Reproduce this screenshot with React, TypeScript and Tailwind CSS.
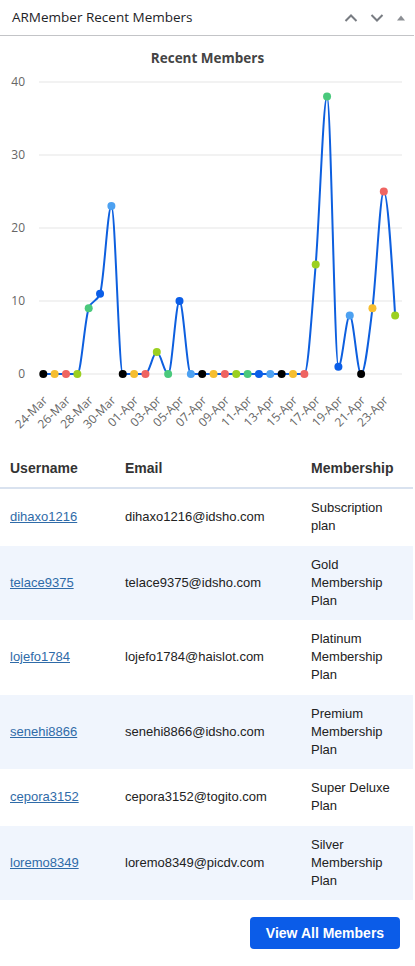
const values = [0, 0, 0, 0, 9, 11, 23, 0, 0, 0, 3, 0, 10, 0, 0, 0, 0, 0, 0, 0, 0, 0, 0, 0, 15, 38, 1, 8, 0, 9, 25, 8];
const colors = ['#000000', '#f6be30', '#ef6461', '#9bd021', '#4ac97c', '#0b5ee8', '#4da1f1'];

const members = [
  { user: 'dihaxo1216', email: 'dihaxo1216@idsho.com', plan: 'Subscription plan' },
  { user: 'telace9375', email: 'telace9375@idsho.com', plan: 'Gold Membership Plan' },
  { user: 'lojefo1784', email: 'lojefo1784@haislot.com', plan: 'Platinum Membership Plan' },
  { user: 'senehi8866', email: 'senehi8866@idsho.com', plan: 'Premium Membership Plan' },
  { user: 'cepora3152', email: 'cepora3152@togito.com', plan: 'Super Deluxe Plan' },
  { user: 'loremo8349', email: 'loremo8349@picdv.com', plan: 'Silver Membership Plan' },
];

// svg coords: page y minus 70
const X0 = 43.3;
const STEP = 11.35;
const Y0 = 304;
const PER = 7.3;

function dateLabel(i: number) {
  const d = new Date(2024, 2, 24 + i);
  const day = String(d.getDate()).padStart(2, '0');
  return `${day}-${d.getMonth() === 2 ? 'Mar' : 'Apr'}`;
}

function monotonePath(pts: [number, number][]) {
  const n = pts.length;
  const sign = (v: number) => (v < 0 ? -1 : 1);
  const t: number[] = new Array(n).fill(0);
  for (let i = 1; i < n - 1; i++) {
    const [x0, y0] = pts[i - 1];
    const [x1, y1] = pts[i];
    const [x2, y2] = pts[i + 1];
    const h0 = x1 - x0;
    const h1 = x2 - x1;
    const s0 = (y1 - y0) / h0;
    const s1 = (y2 - y1) / h1;
    const p = (s0 * h1 + s1 * h0) / (h0 + h1);
    t[i] = (sign(s0) + sign(s1)) * Math.min(Math.abs(s0), Math.abs(s1), 0.5 * Math.abs(p)) || 0;
  }
  const h = pts[1][0] - pts[0][0];
  t[0] = (3 * (pts[1][1] - pts[0][1]) / h - t[1]) / 2;
  const hl = pts[n - 1][0] - pts[n - 2][0];
  t[n - 1] = (3 * (pts[n - 1][1] - pts[n - 2][1]) / hl - t[n - 2]) / 2;
  let d = `M${pts[0][0]},${pts[0][1]}`;
  for (let i = 0; i < n - 1; i++) {
    const [x0, y0] = pts[i];
    const [x1, y1] = pts[i + 1];
    const dx = (x1 - x0) / 3;
    d += ` C${x0 + dx},${y0 + dx * t[i]} ${x1 - dx},${y1 - dx * t[i + 1]} ${x1},${y1}`;
  }
  return d;
}

function Chart() {
  const pts: [number, number][] = values.map((v, i) => [X0 + i * STEP, Y0 - v * PER]);
  return (
    <svg width="415" height="379" viewBox="0 0 415 379" style={{ fontFamily: '"Open Sans", Arial, sans-serif' }}>
      {[0, 10, 20, 30, 40].map((v) => (
        <g key={v}>
          <line x1="39" x2="402" y1={Y0 - v * PER} y2={Y0 - v * PER} stroke="#e5e5e5" strokeWidth="1" />
          <text x="25" y={Y0 - v * PER + 4} textAnchor="end" fontSize="12" fill="#666">
            {v}
          </text>
        </g>
      ))}
      <path d={monotonePath(pts)} fill="none" stroke="#0d5fdf" strokeWidth="2" />
      {pts.map(([x, y], i) => (
        <circle key={i} cx={x} cy={y} r="4" fill={colors[i % 7]} />
      ))}
      {values.map((_, i) =>
        i % 2 === 0 ? (
          <text
            key={i}
            x={X0 + i * STEP + 5}
            y={331}
            textAnchor="end"
            fontSize="12"
            fill="#666"
            transform={`rotate(-45 ${X0 + i * STEP + 5} 331)`}
          >
            {dateLabel(i)}
          </text>
        ) : null
      )}
    </svg>
  );
}

export default function App() {
  return (
    <div className="w-[415px] min-h-[966px] bg-white">
      <div className="h-[36px] border-b border-[#c3c4c7] flex items-center justify-between pl-[12px] pr-[8px] w-[414px]">
        <span className="text-[13.5px] text-[#1d2327]" style={{ fontFamily: '"Open Sans", sans-serif' }}>
          ARMember Recent Members
        </span>
        <div className="flex items-center gap-[12px] text-[#787c82]">
          <svg width="14" height="10" viewBox="0 0 14 10">
            <path d="M1.5 8 L7 2.5 L12.5 8" fill="none" stroke="#787c82" strokeWidth="2" />
          </svg>
          <svg width="14" height="10" viewBox="0 0 14 10">
            <path d="M1.5 2 L7 7.5 L12.5 2" fill="none" stroke="#787c82" strokeWidth="2" />
          </svg>
          <svg width="10" height="10" viewBox="0 0 10 10">
            <path d="M1 7.5 L5 2.5 L9 7.5 Z" fill="#8c8f94" />
          </svg>
        </div>
      </div>

      <div className="h-[34px] pt-[9px] text-center">
        <span className="text-[13.5px] font-bold text-[#444] leading-[20px]" style={{ fontFamily: '"Open Sans", sans-serif' }}>
          Recent Members
        </span>
      </div>
      <Chart />

      <table className="table-fixed w-[413px] border-collapse" style={{ fontFamily: '"Liberation Sans", Arial, sans-serif' }}>
        <colgroup>
          <col className="w-[115px]" />
          <col className="w-[186px]" />
          <col className="w-[112px]" />
        </colgroup>
        <thead>
          <tr className="border-b-2 border-[#d9e2ef]">
            <th className="text-left px-[10px] py-[10px] text-[14px] leading-[18px] font-bold text-[#333]">Username</th>
            <th className="text-left px-[10px] py-[10px] text-[14px] leading-[18px] font-bold text-[#333]">Email</th>
            <th className="text-left px-[10px] py-[10px] text-[14px] leading-[18px] font-bold text-[#333]">Membership</th>
          </tr>
        </thead>
        <tbody>
          {members.map((m, i) => (
            <tr key={m.user} className={i % 2 === 1 ? 'bg-[#f0f5fd]' : 'bg-white'}>
              <td className="px-[10px] py-[10.25px] text-[13px] leading-[18px] align-middle">
                <a href="#" className="text-[#2f6ba8] underline">
                  {m.user}
                </a>
              </td>
              <td className="px-[10px] py-[10.25px] text-[13px] leading-[18px] text-[#222] align-middle">{m.email}</td>
              <td className="px-[10px] py-[10.25px] text-[13px] leading-[18px] text-[#222] align-middle">{m.plan}</td>
            </tr>
          ))}
        </tbody>
      </table>

      <div className="flex justify-end pr-[15px] mt-[17px]">
        <button
          className="w-[150px] h-[32px] rounded-[4px] bg-[#0b5ce8] text-white text-[14px] font-bold"
          style={{ fontFamily: '"Liberation Sans", Arial, sans-serif' }}
        >
          View All Members
        </button>
      </div>
    </div>
  );
}
